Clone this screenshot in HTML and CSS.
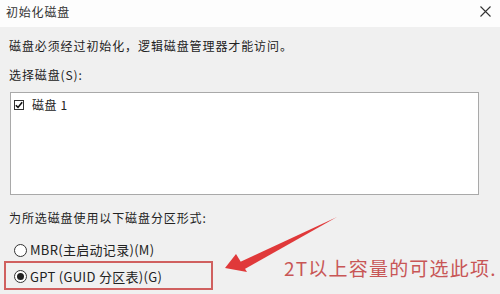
FILE: index.html
```html
<!DOCTYPE html>
<html lang="zh-CN">
<head>
<meta charset="utf-8">
<title>初始化磁盘</title>
<link rel="stylesheet" href="styles.css">
</head>
<body>
<div class="dialog">
  <div class="titlebar">
    <span class="title">初始化磁盘</span>
    <svg class="close" width="11" height="11" viewBox="0 0 11 11"><path d="M0.5 0.5L10.5 10.5M10.5 0.5L0.5 10.5" stroke="#333" stroke-width="1.1" fill="none"/></svg>
  </div>
  <div class="content">
    <p class="line first">磁盘必须经过初始化，逻辑磁盘管理器才能访问。</p>
    <p class="line label">选择磁盘(S):</p>
    <div class="listbox">
      <div class="item">
        <span class="checkbox"><svg width="8" height="8" viewBox="0 0 8 8"><path d="M0.8 4.2L3 6.4L7.2 1.2" stroke="#111" stroke-width="1.6" fill="none"/></svg></span>
        <span>磁盘 1</span>
      </div>
    </div>
    <p class="line label2">为所选磁盘使用以下磁盘分区形式:</p>
    <div class="option mbr"><span class="radio"></span><span>MBR(主启动记录)(M)</span></div>
    <div class="option gpt"><span class="radio on"></span><span>GPT (GUID 分区表)(G)</span></div>
  </div>
  <svg class="arrow" width="500" height="294" viewBox="0 0 500 294">
    <path d="M337 217 L240 262 L243 270 Z" fill="#e0393a"/>
    <path d="M225 268 L236 254 L247 272 Z" fill="#e0393a"/>
  </svg>
  <div class="callout">2T以上容量的可选此项.</div>
</div>
</body>
</html>
```
FILE: styles.css
```css
html, body {
  margin: 0;
  padding: 0;
}
body {
  width: 500px;
  height: 294px;
  overflow: hidden;
  background: #f0f0f0;
  font-family: "Noto Sans CJK SC", "Noto Sans", sans-serif;
  font-size: 12px;
  color: #222;
}
.dialog {
  position: relative;
  width: 500px;
  height: 294px;
}
.titlebar {
  height: 27px;
  background: #fdfdfd;
  display: flex;
  align-items: center;
  justify-content: space-between;
  padding: 0 9px 4px 6px;
  box-sizing: border-box;
}
.title {
  letter-spacing: 0.8px;
  color: #333;
}
.content {
  padding: 0 21px 0 9px;
}
.line {
  margin: 0;
  line-height: 16px;
  letter-spacing: 0.9px;
}
.first {
  margin-top: 11px;
}
.label {
  margin-top: 13px;
}
.listbox {
  margin: 9px 0 0 1px;
  height: 103px;
  box-sizing: border-box;
  background: #fff;
  border: 1px solid #a9a9a9;
  padding: 4px 0 0 3px;
}
.item {
  display: flex;
  align-items: center;
  gap: 8px;
  line-height: 16px;
  letter-spacing: 0.6px;
}
.checkbox {
  width: 10px;
  height: 10px;
  box-sizing: border-box;
  border: 1px solid #333;
  background: #fff;
  display: flex;
  align-items: center;
  justify-content: center;
}
.label2 {
  margin-top: 15px;
}
.option {
  display: flex;
  align-items: center;
  gap: 3px;
  line-height: 16px;
  font-size: 13px;
  letter-spacing: 0.3px;
}
.mbr {
  margin-top: 16px;
  padding-left: 5px;
}
.gpt {
  margin: 3px 0 0 -5px;
  width: 209px;
  height: 29px;
  box-sizing: border-box;
  border: 2px solid #d0605f;
  padding: 2px 0 0 8px;
}
.radio {
  width: 13px;
  height: 13px;
  box-sizing: border-box;
  border: 1px solid #333;
  border-radius: 50%;
  background: #fff;
  display: flex;
  align-items: center;
  justify-content: center;
}
.radio.on::after {
  content: "";
  width: 7px;
  height: 7px;
  border-radius: 50%;
  background: #222;
}
.arrow {
  position: absolute;
  left: 0;
  top: 0;
  pointer-events: none;
}
.callout {
  position: absolute;
  left: 284px;
  top: 255px;
  font-size: 19px;
  line-height: 26px;
  letter-spacing: 1.2px;
  color: #c85656;
  white-space: nowrap;
}
```
